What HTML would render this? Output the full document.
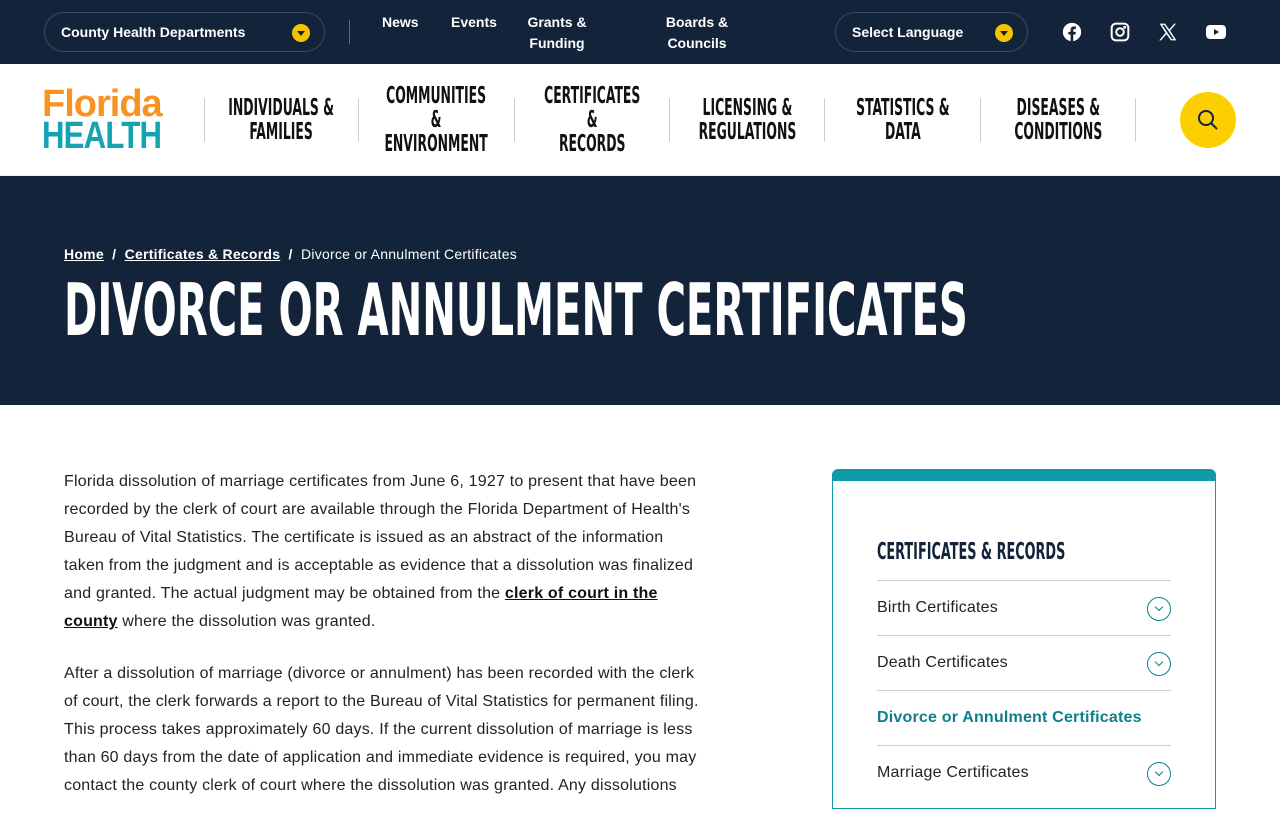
<!DOCTYPE html>
<html><head><meta charset="utf-8"><style>
*{box-sizing:border-box;margin:0;padding:0}
body{width:1280px;height:800px;overflow:hidden;font-family:"Liberation Sans",sans-serif;background:#fff;color:#1a1a1a}
.top{height:64px;background:#13233a;position:relative;color:#fff}
.pill{position:absolute;top:12px;height:40px;border:1px solid #3a4a60;border-radius:20px;font-weight:bold;font-size:14px;line-height:38px;padding-left:16px}
.dd{position:absolute;right:14px;top:11px;width:18px;height:18px;border-radius:50%;background:#f5c400}
.dd:after{content:"";position:absolute;left:5px;top:7px;border-left:4px solid transparent;border-right:4px solid transparent;border-top:5px solid #13233a}
.tl{position:absolute;top:12px;font-weight:bold;font-size:14px;line-height:21px;text-align:center}
.cond{font-family:"Liberation Sans Narrow","DejaVu Sans Condensed","Liberation Sans",sans-serif}
.nav{height:112px;position:relative;border-bottom:1px solid #eee}
.logo{position:absolute;left:42px;font-weight:bold;line-height:32px;font-size:38px;letter-spacing:-1px}
.ni{position:absolute;top:0;height:112px;display:flex;align-items:center;justify-content:center;text-align:center;font-size:23px;line-height:24px;color:#111;width:155px;font-weight:bold}
.ni span{display:inline-block;transform:scaleX(.6);white-space:nowrap}
.sep{position:absolute;top:34px;width:1px;height:44px;background:#ccc}
.hero{height:229px;background:#13233a;color:#fff;position:relative}
.bc{position:absolute;left:64px;top:70px;font-size:14px;font-weight:bold;letter-spacing:.25px}
.bc a{color:#fff;text-decoration:underline}
.bc span{font-weight:normal}
h1{position:absolute;left:64px;top:92px;font-size:72px;font-weight:bold;white-space:nowrap;transform:scaleX(.62);transform-origin:left}
.main{position:absolute;left:64px;top:468px;width:700px;font-size:16px;line-height:28px;color:#222;letter-spacing:.2px;white-space:nowrap}
.main p{margin-bottom:24px}
.main a{color:#111;font-weight:bold;text-decoration:underline}
.side{position:absolute;left:832px;top:469px;width:384px;height:340px;border:1px solid #0e9aa7;border-top:12px solid #0e9aa7;border-radius:6px 6px 0 0}
.side h3{position:absolute;left:44px;top:58px;font-size:23px;font-weight:bold;color:#13233a;transform:scaleX(.62);transform-origin:left;white-space:nowrap}
.item{position:absolute;left:44px;width:294px;height:55px;border-top:1px solid #ccc;font-size:16px;line-height:54px;color:#222;letter-spacing:.2px}
.chev{position:absolute;right:0;top:16px;width:24px;height:24px;border:1.3px solid #0e7f8a;border-radius:50%}
.chev:after{content:"";position:absolute;left:8px;top:6px;width:5px;height:5px;border-right:1.3px solid #0e7f8a;border-bottom:1.3px solid #0e7f8a;transform:rotate(45deg)}
</style></head><body>
<div class="top">
 <div class="pill" style="left:44px;width:281px">County Health Departments<span class="dd"></span></div>
 <div style="position:absolute;left:349px;top:20px;width:1px;height:24px;background:#5a6a80"></div>
 <div class="tl" style="left:382px">News</div>
 <div class="tl" style="left:451px">Events</div>
 <div class="tl" style="left:510px;width:94px">Grants &amp;<br>Funding</div>
 <div class="tl" style="left:652px;width:90px">Boards &amp;<br>Councils</div>
 <div class="pill" style="left:835px;width:193px">Select Language<span class="dd"></span></div>
 <svg style="position:absolute;left:1062px;top:22px" width="20" height="20" viewBox="0 0 24 24"><circle cx="12" cy="12" r="11" fill="#fff"/><path d="M13.5 23v-8h2.7l.4-3.2h-3.1V9.9c0-.9.3-1.5 1.6-1.5h1.6V5.5c-.3 0-1.3-.1-2.4-.1-2.4 0-4 1.4-4 4.1v2.3H7.6V15h2.7v8z" fill="#13233a"/></svg>
 <svg style="position:absolute;left:1110px;top:22px" width="20" height="20" viewBox="0 0 24 24" fill="none" stroke="#fff" stroke-width="2.4"><rect x="2" y="2" width="20" height="20" rx="5"/><circle cx="12" cy="12" r="4.5"/><circle cx="17.6" cy="6.4" r=".6" fill="#fff"/></svg>
 <svg style="position:absolute;left:1158px;top:22px" width="20" height="20" viewBox="0 0 24 24"><path d="M2 2h6.5l5 7 6-7h2.2l-7.2 8.4L22 22h-6.5l-5.4-7.5L3.6 22H1.4l7.7-8.9z" fill="#fff"/><path d="M5 3.5h2.6l11.5 17h-2.6z" fill="#13233a"/></svg>
 <svg style="position:absolute;left:1206px;top:24px" width="20" height="16" viewBox="0 0 20 16"><rect x="0" y="1" width="20" height="14" rx="4" fill="#fff"/><path d="M8 5v6l5-3z" fill="#13233a"/></svg>
</div>
<div class="nav">
 <div class="logo" style="top:24px;left:42px"><div style="color:#f7931e">Florida</div><div style="color:#16a3b1;transform:scaleX(.82);transform-origin:left">HEALTH</div></div>
 <div class="sep" style="left:204px"></div>
 <div class="ni cond" style="left:204px"><span>INDIVIDUALS &amp;<br>FAMILIES</span></div>
 <div class="sep" style="left:358px"></div>
 <div class="ni cond" style="left:359px"><span>COMMUNITIES<br>&amp;<br>ENVIRONMENT</span></div>
 <div class="sep" style="left:514px"></div>
 <div class="ni cond" style="left:515px"><span>CERTIFICATES<br>&amp;<br>RECORDS</span></div>
 <div class="sep" style="left:669px"></div>
 <div class="ni cond" style="left:670px"><span>LICENSING &amp;<br>REGULATIONS</span></div>
 <div class="sep" style="left:824px"></div>
 <div class="ni cond" style="left:825px"><span>STATISTICS &amp;<br>DATA</span></div>
 <div class="sep" style="left:980px"></div>
 <div class="ni cond" style="left:981px"><span>DISEASES &amp;<br>CONDITIONS</span></div>
 <div class="sep" style="left:1135px"></div>
 <div style="position:absolute;left:1180px;top:28px;width:56px;height:56px;border-radius:50%;background:#fccf00"></div>
 <svg style="position:absolute;left:1197px;top:45px" width="22" height="22" viewBox="0 0 22 22" fill="none" stroke="#13233a" stroke-width="2"><circle cx="9" cy="9" r="7"/><path d="M14 14l6 6"/></svg>
</div>
<div class="hero">
 <div class="bc"><a>Home</a> &nbsp;/&nbsp; <a>Certificates &amp; Records</a> &nbsp;/&nbsp; <span>Divorce or Annulment Certificates</span></div>
 <h1 class="cond">DIVORCE OR ANNULMENT CERTIFICATES</h1>
</div>
<div class="main">
<p>Florida dissolution of marriage certificates from June 6, 1927 to present that have been<br>recorded by the clerk of court are available through the Florida Department of Health's<br>Bureau of Vital Statistics. The certificate is issued as an abstract of the information<br>taken from the judgment and is acceptable as evidence that a dissolution was finalized<br>and granted. The actual judgment may be obtained from the <a>clerk of court in the</a><br><a>county</a> where the dissolution was granted.</p>
<p>After a dissolution of marriage (divorce or annulment) has been recorded with the clerk<br>of court, the clerk forwards a report to the Bureau of Vital Statistics for permanent filing.<br>This process takes approximately 60 days. If the current dissolution of marriage is less<br>than 60 days from the date of application and immediate evidence is required, you may<br>contact the county clerk of court where the dissolution was granted. Any dissolutions</p>
</div>
<div class="side">
 <h3 class="cond">CERTIFICATES &amp; RECORDS</h3>
 <div class="item" style="top:99px">Birth Certificates<span class="chev"></span></div>
 <div class="item" style="top:154px">Death Certificates<span class="chev"></span></div>
 <div class="item" style="top:209px;color:#0e7f8a;font-weight:bold">Divorce or Annulment Certificates</div>
 <div class="item" style="top:264px">Marriage Certificates<span class="chev"></span></div>
</div>
</body></html>
